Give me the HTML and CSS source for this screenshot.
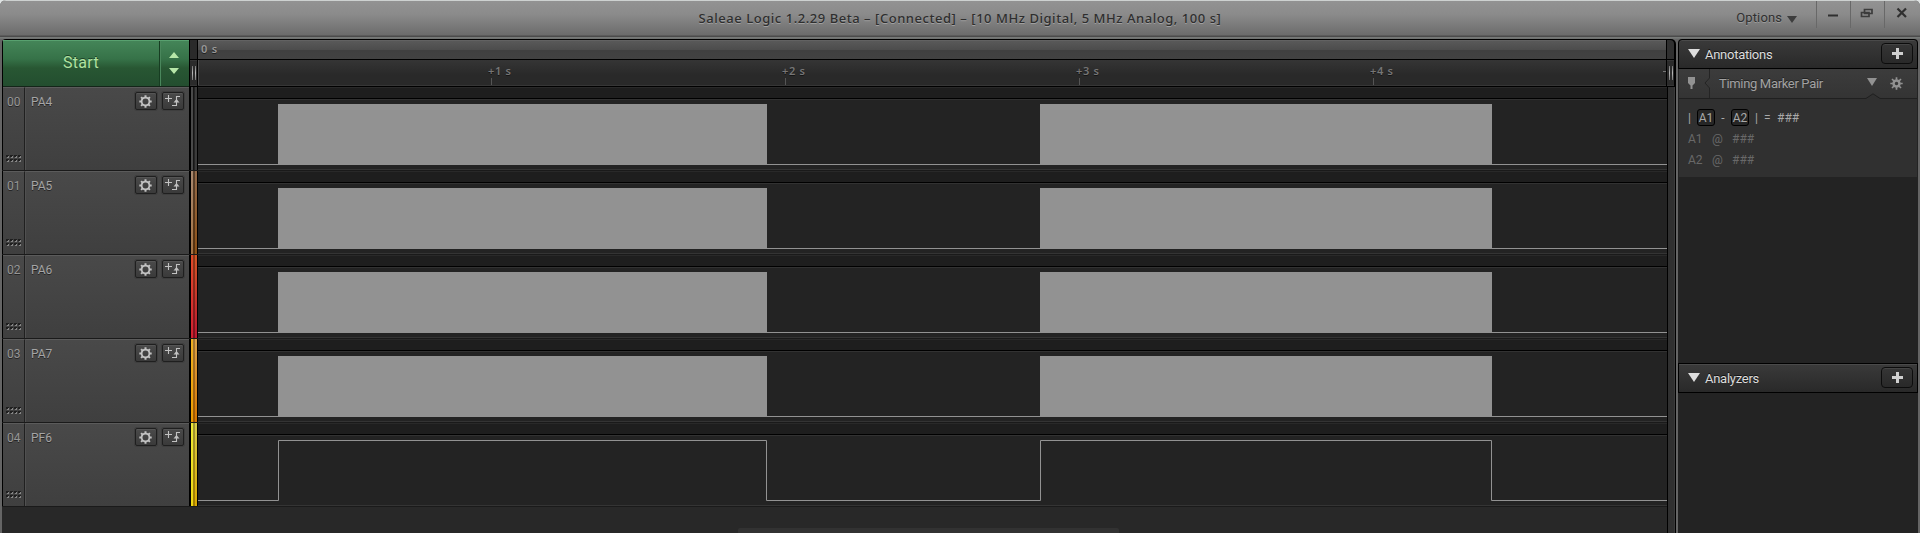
FILE: index.html
```html
<!DOCTYPE html>
<html lang="en">
<head>
<meta charset="utf-8">
<title>Saleae Logic</title>
<link rel="stylesheet" href="styles.css">
</head>
<body>
<svg class="defs" width="0" height="0" aria-hidden="true">
  <symbol id="gear" viewBox="0 0 13 13">
    <circle cx="6.5" cy="6.5" r="3.9" fill="none" stroke="currentColor" stroke-width="1.8"/>
    <path d="M6.5 .3v2M6.5 10.7v2M.3 6.5h2M10.7 6.5h2M2.100 2.100l1.500 1.500M9.400 9.400l1.500 1.500M2.100 10.900l1.500-1.500M9.400 3.600l1.500-1.500" stroke="currentColor" stroke-width="2" fill="none"/>
  </symbol>
  <symbol id="trigger" viewBox="0 0 16 12">
    <path d="M0 3.5h7M3.5 0v7M7 10.5h4.5v-9H15" stroke="currentColor" fill="none" stroke-width="1.1"/>
    <path d="M8.5 7.5L11.5 4l3 3.5z" fill="currentColor"/>
  </symbol>
  <symbol id="grip" viewBox="0 0 15 7">
    <path d="M0 1h15M0 5h15" stroke="#1f1f1f" stroke-width="2" stroke-dasharray="3 1"/>
    <path d="M1 2.5h14M1 6.5h14" stroke="#858585" stroke-dasharray="2 2"/>
    <path d="M2.5 1v1M6.5 1v1M10.5 1v1M14.5 1v1M2.5 5v1M6.5 5v1M10.5 5v1M14.5 5v1" stroke="#858585"/>
  </symbol>
  <symbol id="burst" viewBox="0 0 1469 71">
    <path d="M0 65.5H1469" stroke="#929292"/>
    <path d="M80 5H569V66H80zM842 5H1294V66H842z" fill="#929292"/>
  </symbol>
  <symbol id="plus" viewBox="0 0 11 11"><path d="M4 0h3v4h4v3H7v4H4V7H0V4h4z" fill="currentColor"/></symbol>
  <symbol id="down" viewBox="0 0 12 9"><path d="M0 0h12L6 9z" fill="currentColor"/></symbol>
</svg>
<div class="window">
  <header class="titlebar">
    <div class="title">Saleae Logic 1.2.29 Beta – [Connected] – [10 MHz Digital, 5 MHz Analog, 100 s]</div>
    <div class="controls">
      <div class="options">Options <svg width="10" height="7"><path d="M0 0h10L5 7z" fill="#3d3d3d"/></svg></div>
      <div class="winbtn"><svg width="12" height="12"><path d="M1 8.5h10" stroke="#303030" stroke-width="2"/></svg></div>
      <div class="winbtn"><svg width="14" height="12"><path d="M4.5 2.5h7.5v4h-7.5zM1.5 5.5h7.5v4H1.5z" fill="none" stroke="#3c3c3c" stroke-width="1.7"/></svg></div>
      <div class="winbtn last"><svg width="12" height="12"><path d="M1.5 1.5l8.5 8.5M10 1.5L1.5 10" stroke="#303030" stroke-width="2.2"/></svg></div>
    </div>
  </header>
  <div class="body">
    <main class="capture">
      <div class="head">
        <div class="start">
          <div class="start-label">Start</div>
          <div class="spin"><svg width="10" height="22"><path d="M0 6h10L5 0zM0 16h10l-5 6z" fill="#b6e6a8"/></svg></div>
        </div>
        <div class="handle"><div class="cap"></div><div class="hold"><i class="bars"></i></div></div>
        <div class="ruler">
          <div class="origin">0 s</div>
          <div class="ticks">
            <span class="zero"></span>
            <span>+1 s</span><span>+2 s</span><span>+3 s</span><span>+4 s</span>
            <i class="dash"></i>
          </div>
        </div>
        <div class="handle right"><div class="cap"></div><div class="hold"><i class="bars"></i></div></div>
      </div>
      <div class="rows">
        <div class="channels">
          <div class="row">
            <div class="num">00<svg width="15" height="7"><use href="#grip"/></svg></div>
            <div class="name">PA4<span class="btns"><b><svg width="13" height="13"><use href="#gear"/></svg></b><b><svg width="16" height="12"><use href="#trigger"/></svg></b></span></div>
            <div class="strip none"></div>
            <div class="track"><div class="lane"></div><svg width="1469" height="71"><use href="#burst"/></svg></div>
          </div>
          <div class="row">
            <div class="num">01<svg width="15" height="7"><use href="#grip"/></svg></div>
            <div class="name">PA5<span class="btns"><b><svg width="13" height="13"><use href="#gear"/></svg></b><b><svg width="16" height="12"><use href="#trigger"/></svg></b></span></div>
            <div class="strip brown"></div>
            <div class="track"><div class="lane"></div><svg width="1469" height="71"><use href="#burst"/></svg></div>
          </div>
          <div class="row">
            <div class="num">02<svg width="15" height="7"><use href="#grip"/></svg></div>
            <div class="name">PA6<span class="btns"><b><svg width="13" height="13"><use href="#gear"/></svg></b><b><svg width="16" height="12"><use href="#trigger"/></svg></b></span></div>
            <div class="strip red"></div>
            <div class="track"><div class="lane"></div><svg width="1469" height="71"><use href="#burst"/></svg></div>
          </div>
          <div class="row">
            <div class="num">03<svg width="15" height="7"><use href="#grip"/></svg></div>
            <div class="name">PA7<span class="btns"><b><svg width="13" height="13"><use href="#gear"/></svg></b><b><svg width="16" height="12"><use href="#trigger"/></svg></b></span></div>
            <div class="strip orange"></div>
            <div class="track"><div class="lane"></div><svg width="1469" height="71"><use href="#burst"/></svg></div>
          </div>
          <div class="row">
            <div class="num">04<svg width="15" height="7"><use href="#grip"/></svg></div>
            <div class="name">PF6<span class="btns"><b><svg width="13" height="13"><use href="#gear"/></svg></b><b><svg width="16" height="12"><use href="#trigger"/></svg></b></span></div>
            <div class="strip yellow"></div>
            <div class="track"><div class="lane"></div><svg width="1469" height="71"><path d="M0 65.5H80.5V5.500H568.5V65.5H842.5V5.500H1293.5V65.5H1469" fill="none" stroke="#929292"/></svg></div>
          </div>
          <div class="empty"><div class="scroll"></div></div>
        </div>
        <div class="edge"></div>
      </div>
    </main>
    <aside class="side">
      <section class="annotations">
        <div class="bar first"><svg width="12" height="9"><use href="#down"/></svg><span>Annotations</span><b class="add"><svg width="11" height="11"><use href="#plus"/></svg></b></div>
        <div class="marker">
          <svg class="pin" width="7" height="12"><path d="M0 0h7v6L4.500 8.500V12h-2V8.500L0 6z" fill="#929292"/></svg>
          <svg class="notch" width="6" height="29"><path d="M5.500 0v9L1 14l4.500 5v10" fill="none" stroke="#242424"/></svg>
          <span>Timing Marker Pair</span>
          <svg class="drop" width="10" height="8"><path d="M0 0h10L5 8z" fill="#929292"/></svg>
          <svg class="cog" width="13" height="13"><circle cx="6.500" cy="6.500" r="3" fill="none" stroke="#929292" stroke-width="2.500"/><path d="M6.500 .3v2.500M6.500 10.200v2.500M.3 6.500h2.500M10.200 6.500h2.500M2 2l2 2M9 9l2 2M2 11l2-2M9 4l2-2" stroke="#929292" stroke-width="1.700"/></svg>
          <svg class="peak" width="16" height="6"><path d="M0 6V5.500L8 .8 16 5.500V6z" fill="#303030"/><path d="M0 5.500h1L8 .8 15 5.500h1" fill="none" stroke="#202020"/></svg>
        </div>
        <div class="values">
          <div class="pair"><span class="pipe">|</span><em>A1</em><span class="minus">-</span><em>A2</em><span class="pipe2">|</span><span class="eq">=</span><span>###</span></div>
          <div class="val"><span>A1</span><span class="at">@</span><span>###</span></div>
          <div class="val"><span>A2</span><span class="at">@</span><span>###</span></div>
        </div>
      </section>
      <section class="analyzers">
        <div class="bar"><svg width="12" height="9"><use href="#down"/></svg><span>Analyzers</span><b class="add"><svg width="11" height="11"><use href="#plus"/></svg></b></div>
      </section>
    </aside>
  </div>
</div>
</body>
</html>
```

FILE: styles.css
```css
* { box-sizing: border-box; }
body { margin: 0; background: #dfe3e3; font-family: Roboto, "Liberation Sans", sans-serif; overflow: hidden; }
svg { display: block; flex: none; }
.defs { position: absolute; }
.window { width: 1920px; height: 533px; display: flex; flex-direction: column; background: #656565; border-radius: 6px 6px 0 0; overflow: hidden; }

.titlebar { height: 39px; flex: none; display: grid; grid-template-columns: 1fr auto 1fr; border-top: 1px solid #cdd1d0; background: linear-gradient(#929292, #8b8b8b 35%, #6c6c6c 34px, #4b4b4b 35px, #4b4b4b 36px, #7a7d7b 36px, #6c6e6d 38px); }
.title { grid-column: 2; padding-top: 8px; font: 500 13px/18px "Noto Sans", sans-serif; letter-spacing: .54px; color: #2e2e2e; text-shadow: 0 1px 0 #a0a0a0; white-space: nowrap; }
.controls { display: flex; justify-content: flex-end; font-size: 13px; line-height: 18px; color: #303030; text-shadow: 0 1px 0 #9b9b9b; }
.options { display: flex; align-items: center; gap: 5px; height: 18px; margin: 8px 19px 0 0; letter-spacing: .1px; }
.options svg { margin-top: 3px; }
.winbtn { width: 34px; height: 27px; border-left: 1px solid #686868; display: flex; justify-content: center; padding: 6px 1px 0 0; }
.winbtn.last { width: 36px; padding-right: 2px; }

.body { flex: 1; min-height: 0; display: flex; gap: 2px; padding: 0 2px; }
.capture { width: 1674px; flex: none; display: flex; flex-direction: column; background: #000; border-radius: 4px 5px 0 0; overflow: hidden; }
.head { display: flex; height: 48px; flex: none; padding: 1px 1px 1px 1px; }
.start { width: 186px; display: flex; background: linear-gradient(#448558, #367248 40%, #285733 60%, #234e2f); border-top: 1px solid #58a16f; margin-bottom: -1px; border-bottom: 1px solid #142519; }
.start-label { width: 157px; padding: 0 0 2px; border-right: 1px solid #173d22; display: flex; align-items: center; justify-content: center; font-size: 16px; letter-spacing: .35px; color: #b0e2a0; text-shadow: 0 -1px 0 #1d4228; }
.spin { flex: 1; display: flex; align-items: center; justify-content: center; border-left: 1px solid #4a875c; padding: 0 2px 2px 0; }
.handle { width: 7px; margin: 0 1px; display: flex; flex-direction: column; gap: 1px; }
.cap { height: 19px; background: #2a2a2a; }
.hold { flex: 1; background: #2b2b2b; border: solid #363636; border-width: 1px 0; padding: 5px 1px 0 2px; }
.bars { display: block; width: 4px; height: 14px; background: linear-gradient(#777, #b8b8b8 50%, #777) 0 0 / 1px 14px no-repeat, linear-gradient(#777, #b8b8b8 50%, #777) 3px 0 / 1px 14px no-repeat; }
.handle.right .cap { border-radius: 0 4px 0 0; background: #303030; }
.ruler { width: 1469px; display: flex; flex-direction: column; gap: 1px; font-family: "Noto Sans", sans-serif; }
.origin { height: 19px; background: linear-gradient(#595959, #4c4c4c 50%, #404040 52%, #424242); border-top: 1px solid #626262; padding-left: 3px; font: 600 11px/16px "Noto Sans", sans-serif; color: #999; letter-spacing: .8px; text-shadow: 0 1px 0 #222; }
.ticks { flex: 1; position: relative; display: grid; grid-template-columns: 290px repeat(4, 294px); overflow: hidden; background: linear-gradient(#353535, #292929 60%, #292929); border-bottom: 1px solid #363636; color: #767676; font: 600 11px/15px "Noto Sans", sans-serif; letter-spacing: .75px; text-shadow: 0 1px 0 #151515; padding-top: 3px; }
.ticks span { background: linear-gradient(#555, #555) 3px 15px / 1px 8px no-repeat; }
.ticks .zero { margin-top: -3px; background: none; border-left: 1px solid #4f4f4f; }
.dash { position: absolute; right: 0; top: 11px; width: 3px; height: 1px; background: #777; }

.rows { flex: 1; min-height: 0; display: flex; gap: 1px; }
.channels { width: 1665px; display: flex; flex-direction: column; background: #282828; }
.row { height: 84px; flex: none; display: flex; background: #000; border-bottom: 1px solid #1a1a1a; padding-left: 1px; }
.num { width: 22px; border-right: 1px solid #202020; border-top: 1px solid #5b5b5b; background: linear-gradient(#494949, #3f3f3f); padding: 5px 0 0 4px; font-size: 12px; line-height: 19px; color: #969696; text-shadow: 0 1px 0 #252525; display: flex; flex-direction: column; justify-content: space-between; }
.num svg { margin: 0 0 8px -1px; }
.name { width: 164px; border-top: 1px solid #5b5b5b; border-left: 1px solid #505050; background: linear-gradient(#494949, #3f3f3f); padding: 5px 5px 0; font-size: 12px; line-height: 19px; color: #a5a5a5; text-shadow: 0 1px 0 #252525; display: flex; justify-content: space-between; }
.btns { display: flex; gap: 5px; margin-top: -1px; }
.btns b { width: 22px; height: 18px; border: 1px solid #1f1f1f; border-radius: 2px; background: linear-gradient(#4a4a4a, #3a3a3a); box-shadow: inset 0 1px 0 #555, 0 0 0 1px #3e3e3e; color: #c2c2c2; display: flex; align-items: center; justify-content: center; }
.btns b:first-child { padding-right: 1px; }
.strip { width: 6px; margin: 0 1px 0 2px; flex: none; }
.none { background: linear-gradient(90deg, #4a4a4a 2px, #151515 2px 3px, #242424 3px 4px, #3b3b3b 4px); }
.brown { background: linear-gradient(90deg, #fff3 2px, #0006 2px 4px, #0000 4px), linear-gradient(#946b4b, #8f5217); }
.red { background: linear-gradient(90deg, #ff303050 2px, #0005 2px 4px, #0000 4px), linear-gradient(#d35727, #bc172f); }
.orange { background: linear-gradient(90deg, #fb08 2px, #0004 2px 4px, #0000 4px), linear-gradient(#dca249, #d87700); }
.yellow { background: linear-gradient(90deg, #ff28 2px, #0004 2px 4px, #0000 4px), linear-gradient(#d8cc48, #dca900); }
.track { flex: 1; background: #232323; border-bottom: 1px solid #343434; }
.lane { height: 12px; background: #1e1e1e; border-top: 1px solid #292929; border-bottom: 1px solid #000; box-shadow: 0 1px 0 #323232; }
.empty { flex: 1; display: flex; align-items: flex-end; padding-left: 736px; }
.scroll { width: 381px; height: 5px; background: #323232; border-radius: 2px 2px 0 0; }
.edge { width: 7px; background: linear-gradient(90deg, #303030 6px, #3b3b3b 6px); }

.side { flex: 1; display: flex; flex-direction: column; background: #232323; border-radius: 4px 4px 0 0; overflow: hidden; }
.annotations { height: 324px; flex: none; }
.bar { height: 30px; border: 1px solid #000; background: linear-gradient(#3a3a3a, #292929); box-shadow: inset 0 1px 0 #4a4a4a; display: flex; align-items: center; padding: 0 4px 0 9px; font-size: 13px; color: #dcdcdc; text-shadow: 0 -1px 0 #111; }
.bar.first { border-radius: 4px 4px 0 0; }
.bar > svg { margin: -2px 5px 0 0; color: #ddd; }
.bar span { letter-spacing: -.27px; }
.add { width: 32px; height: 21px; margin: -1px 0 0 auto; border: 1px solid #0c0c0c; border-radius: 4px; background: linear-gradient(#353535, #292929); box-shadow: inset 0 1px 0 #444; display: flex; align-items: center; justify-content: center; color: #cfcfcf; }
.marker { height: 30px; position: relative; margin: 0 1px; background: linear-gradient(#3c3c3c, #343434); border-bottom: 1px solid #202020; display: flex; align-items: center; padding: 0 14px 0 9px; font-size: 13px; letter-spacing: -.33px; color: #a2a2a2; text-shadow: 0 -1px 0 #222; }
.marker .pin { margin-top: -2px; }
.marker .notch { margin: 0 9px 0 9px; }
.marker .drop { margin: -3px 13px 0 auto; }
.peak { position: absolute; right: 36px; bottom: -1px; }
.values { height: 78px; margin: 0 1px; padding: 9px 0 0 9px; background: #303030; font-size: 12px; color: #a9a9a9; }
.pair { height: 20px; display: flex; align-items: center; }
.pair em { width: 18px; height: 17px; border: 1px solid #000; border-radius: 3px; background: #262626; font-style: normal; line-height: 17px; text-align: center; margin-top: -2px; }
.pipe { width: 9px; }
.minus { width: 16px; text-align: center; }
.pipe2 { width: 15px; padding-left: 6px; }
.eq { width: 13px; }
.val { height: 21px; display: flex; align-items: center; color: #686868; }
.val span { width: 24px; }
.val .at { width: 20px; }
```
